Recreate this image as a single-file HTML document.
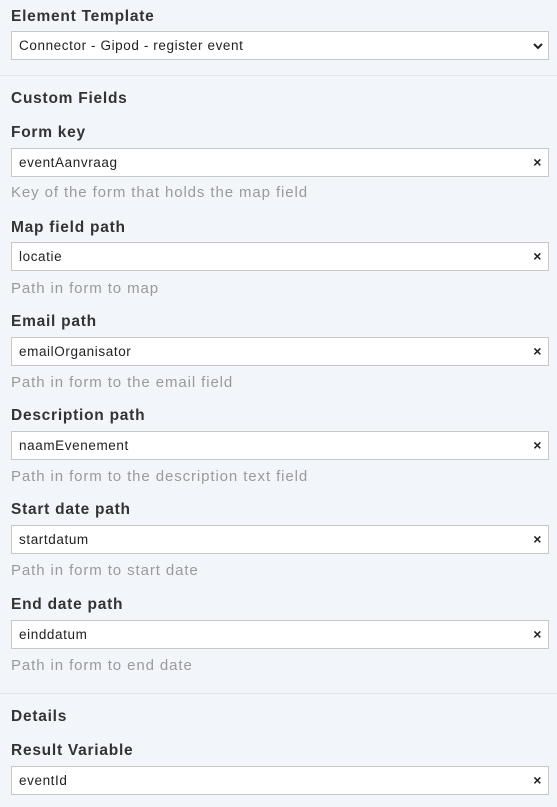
<!DOCTYPE html>
<html><head><style>
body{margin:0;width:557px;height:807px;background:#f2f5f9;font-family:"Liberation Sans",sans-serif;position:relative;overflow:hidden}
.l{position:absolute;left:11px;font-size:15.5px;font-weight:bold;color:#333;line-height:18px;letter-spacing:0.75px}
.i{position:absolute;left:11px;width:536px;height:27px;background:#fff;border:1px solid #c8c8c8;font-size:13.5px;color:#222;line-height:27px;box-sizing:content-box;letter-spacing:0.6px}
.i span{position:absolute;left:7px}
.i b{position:absolute;right:6px;top:0;font-size:14px;color:#222}
.d{position:absolute;left:11px;font-size:15px;color:#9a9a9a;line-height:18px;letter-spacing:0.9px}
.sep{position:absolute;left:0;width:557px;height:1px;background:#e3e6ea}
</style></head><body>
<div class="l" style="top:8px">Element Template</div>
<div class="i" style="top:31px"><span>Connector - Gipod - register event</span>
<svg style="position:absolute;right:5px;top:10px" width="10" height="8" viewBox="0 0 10 8"><path d="M1 2l4 4 4-4" stroke="#222" stroke-width="2" fill="none"/></svg></div>
<div class="sep" style="top:75px"></div>
<div class="l" style="top:90px">Custom Fields</div>
<div class="l" style="top:124px">Form key</div>
<div class="i" style="top:148px"><span>eventAanvraag</span><b>×</b></div>
<div class="d" style="top:184px">Key of the form that holds the map field</div>
<div class="l" style="top:219px">Map field path</div>
<div class="i" style="top:242px"><span>locatie</span><b>×</b></div>
<div class="d" style="top:280px">Path in form to map</div>
<div class="l" style="top:313px">Email path</div>
<div class="i" style="top:337px"><span>emailOrganisator</span><b>×</b></div>
<div class="d" style="top:374px">Path in form to the email field</div>
<div class="l" style="top:407px">Description path</div>
<div class="i" style="top:431px"><span>naamEvenement</span><b>×</b></div>
<div class="d" style="top:468px">Path in form to the description text field</div>
<div class="l" style="top:501px">Start date path</div>
<div class="i" style="top:525px"><span>startdatum</span><b>×</b></div>
<div class="d" style="top:562px">Path in form to start date</div>
<div class="l" style="top:596px">End date path</div>
<div class="i" style="top:620px"><span>einddatum</span><b>×</b></div>
<div class="d" style="top:657px">Path in form to end date</div>
<div class="sep" style="top:693px"></div>
<div class="l" style="top:708px">Details</div>
<div class="l" style="top:742px">Result Variable</div>
<div class="i" style="top:766px"><span>eventId</span><b>×</b></div>
</body></html>
